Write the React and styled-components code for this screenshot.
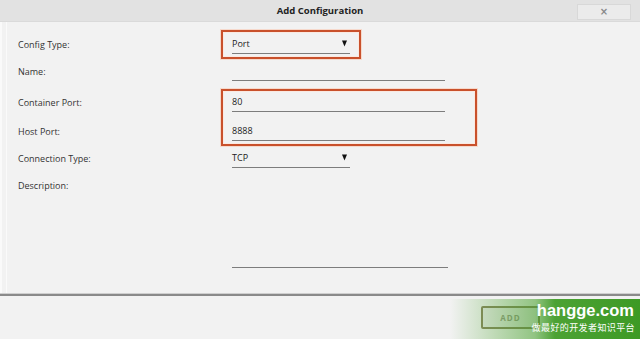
import React from 'react';
import styled, { createGlobalStyle } from 'styled-components';

const GlobalStyle = createGlobalStyle`
  html, body {
    margin: 0;
    padding: 0;
    background: #f2f2f2;
  }
  #root {
    height: 100vh;
  }
`;

const Dialog = styled.div`
  position: relative;
  display: flex;
  flex-direction: column;
  height: 100vh;
  overflow: hidden;
  background: #f2f2f2;
  font-family: "Open Sans", "Liberation Sans", sans-serif;
  color: #333;
  box-shadow: inset 2px 0 0 #fafafa, inset 6px 0 0 #f2f2f2, inset 7px 0 0 #fafafa;
`;

const Header = styled.div`
  position: relative;
  height: 22px;
  flex: none;
  display: flex;
  align-items: center;
  justify-content: center;
  background: #e2e2e2;
  border-bottom: 1px solid #dadada;
  box-sizing: border-box;
`;

const Title = styled.div`
  font-size: 9.5px;
  font-weight: 700;
  color: #222;
`;

const CloseButton = styled.button`
  position: absolute;
  right: 9px;
  top: 4px;
  width: 54px;
  height: 16px;
  padding: 0;
  border: 1px solid #d8d8d8;
  background: #ebebeb;
  color: #888;
  font-size: 10px;
  font-weight: 700;
  line-height: 14px;
  font-family: "DejaVu Sans", sans-serif;
`;

const Body = styled.div`
  flex: 1;
  padding: 8px 0 0 18px;
  display: flex;
  flex-direction: column;
`;

const Row = styled.div`
  display: flex;
  align-items: flex-start;
  height: ${(p) => p.$h}px;
  padding-top: ${(p) => p.$pt || 0}px;
  box-sizing: border-box;
`;

const LabelCol = styled.div`
  width: 214px;
  flex: none;
  display: flex;
  flex-direction: column;
  gap: 9px;
  padding-top: ${(p) => p.$pt || 0}px;
`;

const Label = styled.div`
  height: 20px;
  display: flex;
  align-items: center;
  font-size: 9px;
  color: #333;
`;

const Mark = styled.div`
  margin-left: -11px;
  border: 2px solid #c9512c;
  box-shadow: 0 0 0 1px #f6d9cc, inset 0 0 0 1px #fbe9e1;
  padding: ${(p) => p.$pad};
  display: flex;
  flex-direction: column;
  gap: 9px;
`;

const Field = styled.div`
  width: ${(p) => p.$w}px;
  height: ${(p) => p.$h || 20}px;
  box-sizing: border-box;
  display: flex;
  align-items: center;
  justify-content: space-between;
  border-bottom: 1px solid #7d7d7d;
  font-size: 9px;
  color: #222;
`;

const Arrow = () => (
  <svg width="5" height="7" viewBox="0 0 5 7" style={{ marginRight: 3 }}>
    <path d="M0 0.5 L5 0.5 L2.5 6.5 Z" fill="#111" />
  </svg>
);

const Separator = styled.div`
  flex: none;
  height: 2px;
  border-top: 1px solid #cfcfcf;
  background: #8a8a8a;
`;

const Footer = styled.div`
  flex: none;
  height: 43px;
  display: flex;
  align-items: flex-start;
  padding: 10px 0 0 481px;
  box-sizing: border-box;
  background: #f2f2f2;
`;

const AddButton = styled.button`
  width: 59px;
  height: 23px;
  border: 2px solid #8a8560;
  border-radius: 2px;
  background: #eaeaea;
  color: #9a9a8a;
  font-family: "Open Sans", "Liberation Sans", sans-serif;
  font-size: 8px;
  font-weight: 700;
  letter-spacing: 1px;
  padding: 0;
`;

const Watermark = styled.div`
  position: absolute;
  right: 0;
  bottom: 0;
  width: 190px;
  height: 40px;
  background: linear-gradient(
    to right,
    rgba(72, 162, 42, 0) 0px,
    rgba(72, 162, 42, 0.3) 45px,
    rgba(66, 158, 38, 0.55) 85px,
    rgba(62, 155, 36, 0.92) 105px,
    #3d9a25 190px
  );
  display: flex;
  flex-direction: column;
  align-items: flex-end;
  padding: 1px 5px 0 0;
  box-sizing: border-box;
  color: #fff;
  pointer-events: none;
`;

const WmTitle = styled.div`
  font-family: "Liberation Sans", Arial, sans-serif;
  font-weight: 700;
  font-size: 16.5px;
  line-height: 20px;
  margin-right: 1px;
`;

const WmSub = styled.div`
  font-family: "Noto Sans CJK SC", sans-serif;
  font-size: 9px;
  line-height: 14px;
  letter-spacing: 0.4px;
  margin-top: 1px;
`;

export default function App() {
  return (
    <>
      <GlobalStyle />
      <Dialog>
        <Header>
          <Title>Add Configuration</Title>
          <CloseButton>×</CloseButton>
        </Header>
        <Body>
          <Row $h={29}>
            <LabelCol $pt={4}>
              <Label>Config Type:</Label>
            </LabelCol>
            <Mark $pad="2px 9px 3px">
              <Field $w={118}>
                <span>Port</span>
                <Arrow />
              </Field>
            </Mark>
          </Row>
          <Row $h={30} $pt={2}>
            <LabelCol>
              <Label>Name:</Label>
            </LabelCol>
            <Field $w={213} />
          </Row>
          <Row $h={58}>
            <LabelCol $pt={3}>
              <Label>Container Port:</Label>
              <Label>Host Port:</Label>
            </LabelCol>
            <Mark $pad="1px 30px 3px 9px">
              <Field $w={213}>80</Field>
              <Field $w={213}>8888</Field>
            </Mark>
          </Row>
          <Row $h={28} $pt={1}>
            <LabelCol>
              <Label>Connection Type:</Label>
            </LabelCol>
            <Field $w={118}>
              <span>TCP</span>
              <Arrow />
            </Field>
          </Row>
          <Row $h={94}>
            <LabelCol>
              <Label>Description:</Label>
            </LabelCol>
            <Field $w={216} $h={93} />
          </Row>
        </Body>
        <Separator />
        <Footer>
          <AddButton>ADD</AddButton>
        </Footer>
        <Watermark>
          <WmTitle>hangge.com</WmTitle>
          <WmSub>做最好的开发者知识平台</WmSub>
        </Watermark>
      </Dialog>
    </>
  );
}
